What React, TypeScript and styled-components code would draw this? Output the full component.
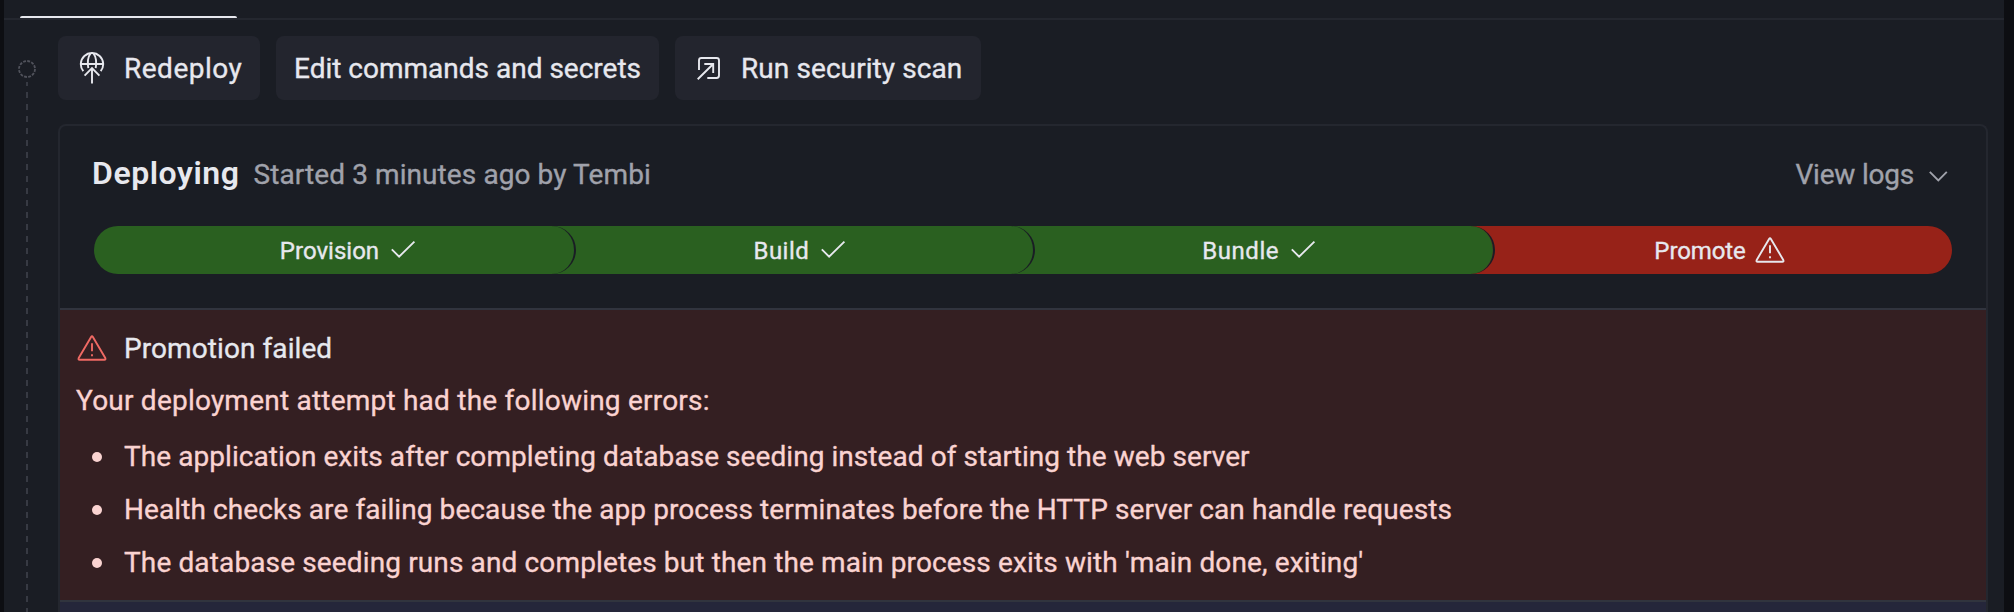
import React from "react";
import styled, { createGlobalStyle, css } from "styled-components";

const color = {
  backdrop: "#0d0e12",
  surface: "#1a1d24",
  raised: "#23252e",
  line: "#24272f",
  divider: "#31343e",
  text: "#e7e8ee",
  muted: "#a0a2ab",
  success: "#2a6020",
  danger: "#972218",
  alert: "#341f22",
  alertText: "#fad3d1",
  alertIcon: "#f06a64",
  info: "#25263a",
};

const GlobalStyle = createGlobalStyle`
  *, *::before, *::after { box-sizing: border-box; }
  body {
    margin: 0;
    background: ${color.backdrop};
    color: ${color.text};
    font-family: Roboto, "Liberation Sans", sans-serif;
    font-size: 28px;
    -webkit-text-stroke: 0.35px currentColor;
  }
`;

const Page = styled.main`
  height: 612px;
  padding: 0 10px 0 4px;
  overflow: hidden;
`;

const Panel = styled.div`
  height: 100%;
  display: flex;
  flex-direction: column;
  background: ${color.surface};
`;

const TabBar = styled.div`
  flex: none;
  height: 20px;
  padding: 0 16px;
  display: flex;
  align-items: flex-end;
  border-bottom: 2px solid ${color.line};
`;

const ActiveTab = styled.div`
  width: 217px;
  height: 2px;
  border-radius: 2px 2px 0 0;
  background: ${color.text};
`;

const Content = styled.div`
  flex: 1;
  min-height: 0;
  display: flex;
  padding-right: 16px;
`;

const Rail = styled.div`
  flex: none;
  width: 54px;
  padding: 40px 0 0 14px;
  display: flex;
  flex-direction: column;
`;

const RailLine = styled.div`
  flex: 1;
  width: 2px;
  margin: 4px 0 0 8px;
  background: repeating-linear-gradient(
    to bottom,
    #373a43 0 4px,
    transparent 4px 10px,
    #373a43 10px 12px
  );
`;

const Main = styled.div`
  flex: 1;
  padding-top: 16px;
  display: flex;
  flex-direction: column;
  gap: 24px;
`;

const Actions = styled.div`
  display: flex;
  gap: 16px;
`;

const Label = styled.span<{ $tracking?: number }>`
  letter-spacing: ${(p) => p.$tracking ?? 0}px;
  white-space: nowrap;
`;

const Button = styled.button<{ $width: number }>`
  width: ${(p) => p.$width}px;
  height: 64px;
  padding: 0 0 0 18px;
  display: flex;
  align-items: center;
  gap: 16px;
  border: 0;
  border-radius: 8px;
  background: ${color.raised};
  color: inherit;
  font: inherit;
  text-align: left;
`;

const Card = styled.section`
  flex: 1;
  border: 2px solid ${color.line};
  border-bottom: 0;
  border-radius: 8px 8px 0 0;
  display: flex;
  flex-direction: column;
`;

const CardHeader = styled.header`
  flex: none;
  height: 184px;
  padding: 22px 32px 0;
  border-bottom: 2px solid ${color.divider};
`;

const TitleRow = styled.div`
  display: flex;
  align-items: baseline;
  height: 50px;
  line-height: 50px;
  margin-bottom: 28px;
`;

const Title = styled.h2`
  margin: 0 14px 0 0;
  font-size: 32px;
  font-weight: 600;
  letter-spacing: 0.55px;
  -webkit-text-stroke: 0;
`;

const Meta = styled.span`
  color: ${color.muted};
  letter-spacing: 0.09px;
`;

const LogsToggle = styled.button`
  margin-left: auto;
  padding: 0;
  display: flex;
  align-items: center;
  gap: 8px;
  border: 0;
  background: none;
  color: ${color.muted};
  font: inherit;
  line-height: 50px;
  svg { margin-top: 2px; }
`;

const Progress = styled.div`
  display: flex;
  margin: 0 2px;
`;

const Step = styled.div<{ $tone: "success" | "danger"; $order: number }>`
  position: relative;
  z-index: ${(p) => 4 - p.$order};
  flex: none;
  width: 482px;
  height: 48px;
  padding: 1px 0 0 16px;
  margin-left: -22.67px;
  display: flex;
  align-items: center;
  justify-content: center;
  gap: 8px;
  border-right: 2px solid ${color.surface};
  border-radius: 0 24px 24px 0;
  background: ${(p) => color[p.$tone]};
  background-clip: padding-box;
  font-size: 24px;

  &:first-child {
    margin-left: 0;
    padding-left: 31px;
    border-radius: 24px;
  }
  ${(p) =>
    p.$order === 3 &&
    css`
      width: 480px;
      border-right: 0;
    `}
  svg { margin-top: -1px; }
`;

const Alert = styled.div`
  flex: none;
  height: 292px;
  padding: 22px 16px 0;
  border-bottom: 2px solid ${color.divider};
  background: ${color.alert};
  color: ${color.alertText};
`;

const AlertTitle = styled.div`
  height: 32px;
  display: flex;
  align-items: center;
  gap: 16px;
  color: ${color.text};
  svg { color: ${color.alertIcon}; }
`;

const AlertText = styled.p`
  margin: 17px 0 9px;
  line-height: 40px;
  letter-spacing: 0.22px;
`;

const ErrorList = styled.ul`
  margin: 0;
  padding: 0 0 0 16px;
  list-style: none;
`;

const ErrorItem = styled.li`
  display: flex;
  align-items: center;
  gap: 22px;
  height: 53px;
  &::before {
    content: "";
    width: 10px;
    height: 10px;
    border-radius: 50%;
    background: currentColor;
  }
`;

const InfoStrip = styled.div`
  flex: 1;
  background: ${color.info};
`;

const Svg = styled.svg.attrs({
  width: 32,
  height: 32,
  viewBox: "0 0 32 32",
  fill: "none",
  stroke: "currentColor",
  strokeWidth: 1.9,
  "aria-hidden": true,
})`
  flex: none;
  display: block;
`;

const DeployIcon = () => (
  <Svg>
    <path d="M7.3 19.2A11.2 11.2 0 1 1 24.7 19.2" />
    <path d="M4.8 12H27.2M14.6 1.2C12.2 4.5 11.2 9.5 12.3 16.2M17.4 1.2C19.8 4.5 20.8 9.5 19.7 16.2" />
    <path d="M16 31.4V16.2M8.6 23.6L16 16.2L23.4 23.6" />
  </Svg>
);

const LaunchIcon = () => (
  <Svg>
    <path d="M6 18V8.4Q6 6 8.4 6H23.6Q26 6 26 8.4V23.6Q26 26 23.6 26H14.3" />
    <path d="M4.7 27.3L20.2 12M11.3 12H20.2V21" />
  </Svg>
);

const CheckIcon = () => (
  <Svg>
    <path d="M4.8 15.4L12.1 22.6L27.4 7.6" />
  </Svg>
);

const WarningIcon = () => (
  <Svg>
    <path
      d="M15.1 4.9Q16 3.5 16.9 4.9L29.3 26Q30 27.8 28.4 27.8H3.6Q2 27.8 2.7 26Z"
      strokeLinejoin="round"
    />
    <path d="M16 11.3V19.3M16 22.3V24.2" />
  </Svg>
);

const ChevronIcon = () => (
  <Svg>
    <path d="M7.8 11.8L16.3 20.3L24.8 11.8" />
  </Svg>
);

const StatusRing = () => (
  <svg width="18" height="18" viewBox="0 0 18 18" fill="none" aria-hidden>
    <circle cx="9" cy="9" r="8" stroke="#50525b" strokeWidth="1.8" strokeDasharray="2.9 1.289" />
  </svg>
);

const steps = [
  { name: "Provision", tone: "success", tracking: 0.01 },
  { name: "Build", tone: "success", tracking: 0.44 },
  { name: "Bundle", tone: "success", tracking: 0.56 },
  { name: "Promote", tone: "danger", tracking: -0.1 },
] as const;

const errors = [
  {
    text: "The application exits after completing database seeding instead of starting the web server",
    tracking: 0.06,
  },
  {
    text: "Health checks are failing because the app process terminates before the HTTP server can handle requests",
    tracking: 0.088,
  },
  {
    text: "The database seeding runs and completes but then the main process exits with 'main done, exiting'",
    tracking: 0.132,
  },
];

export default function App() {
  return (
    <>
      <GlobalStyle />
      <Page>
        <Panel>
          <TabBar>
            <ActiveTab />
          </TabBar>
          <Content>
            <Rail>
              <StatusRing />
              <RailLine />
            </Rail>
            <Main>
              <Actions>
                <Button $width={202}>
                  <DeployIcon />
                  <Label $tracking={0.5}>Redeploy</Label>
                </Button>
                <Button $width={383}>
                  <Label>Edit commands and secrets</Label>
                </Button>
                <Button $width={306}>
                  <LaunchIcon />
                  <Label $tracking={0.08}>Run security scan</Label>
                </Button>
              </Actions>
              <Card>
                <CardHeader>
                  <TitleRow>
                    <Title>Deploying</Title>
                    <Meta>Started 3 minutes ago by Tembi</Meta>
                    <LogsToggle>
                      <Label $tracking={-0.2}>View logs</Label>
                      <ChevronIcon />
                    </LogsToggle>
                  </TitleRow>
                  <Progress>
                    {steps.map((step, i) => (
                      <Step key={step.name} $tone={step.tone} $order={i}>
                        <Label $tracking={step.tracking}>{step.name}</Label>
                        {step.tone === "danger" ? <WarningIcon /> : <CheckIcon />}
                      </Step>
                    ))}
                  </Progress>
                </CardHeader>
                <Alert>
                  <AlertTitle>
                    <WarningIcon />
                    <Label $tracking={0.08}>Promotion failed</Label>
                  </AlertTitle>
                  <AlertText>Your deployment attempt had the following errors:</AlertText>
                  <ErrorList>
                    {errors.map((error) => (
                      <ErrorItem key={error.text}>
                        <Label $tracking={error.tracking}>{error.text}</Label>
                      </ErrorItem>
                    ))}
                  </ErrorList>
                </Alert>
                <InfoStrip />
              </Card>
            </Main>
          </Content>
        </Panel>
      </Page>
    </>
  );
}
